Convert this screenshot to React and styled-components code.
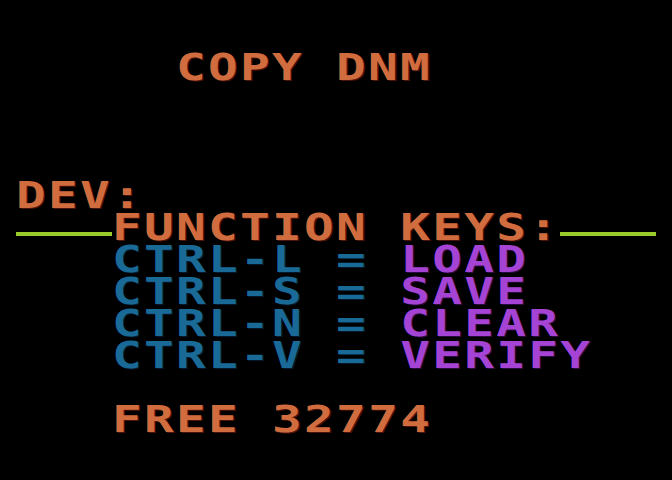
import styled, { createGlobalStyle } from "styled-components";

const GlobalStyle = createGlobalStyle`
	html, body {
		margin: 0;
		padding: 0;
		background: #000;
	}
`;

const COLORS = {
	orange: { fg: "#d06c3e", shade: "#4a140c" },
	blue: { fg: "#1a6a98", shade: "#08182c" },
	purple: { fg: "#a544d4", shade: "#2c0c40" },
	green: { fg: "#9ccc2c", shade: "#203008" },
};

// Atari-ish 20x14 character screen, 32px cells
const Screen = styled.div`
	width: 672px;
	height: 480px;
	box-sizing: border-box;
	padding: 16px;
	background: #000;
	display: grid;
	grid-template-columns: repeat(20, 32px);
	grid-template-rows: repeat(14, 32px);
	overflow: hidden;
`;

const Line = styled.div`
	grid-row: ${(p) => p.$row + 1};
	grid-column: ${(p) => p.$col + 1} / span ${(p) => p.$len};
	height: 32px;
	white-space: pre;
	overflow: visible;
`;

const Glyphs = styled.span`
	display: inline-block;
	padding-top: 6px;
	font-family: "DejaVu Sans Mono", "Liberation Mono", monospace;
	font-weight: bold;
	font-size: 38px;
	line-height: 26px;
	letter-spacing: 1.75px;
	transform: scaleX(1.3);
	transform-origin: left top;
	color: ${(p) => COLORS[p.$color].fg};
	text-shadow: 1px 1px 0 ${(p) => COLORS[p.$color].shade};
`;

const Tint = styled.span`
	color: ${(p) => COLORS[p.$color].fg};
	text-shadow: 1px 1px 0 ${(p) => COLORS[p.$color].shade};
`;

const Rule = styled.div`
	grid-row: ${(p) => p.$row + 1};
	grid-column: ${(p) => p.$col + 1} / span 3;
	align-self: end;
	height: 4px;
	margin-bottom: 4px;
	background: ${COLORS.green.fg};
`;

const keys = [
	["L", "LOAD"],
	["S", "SAVE"],
	["N", "CLEAR"],
	["V", "VERIFY"],
];

export default function App() {
	return (
		<>
			<GlobalStyle />
			<Screen>
				<Line $row={1} $col={5} $len={8}>
					<Glyphs $color="orange">COPY DNM</Glyphs>
				</Line>
				<Line $row={5} $col={0} $len={4}>
					<Glyphs $color="orange">DEV:</Glyphs>
				</Line>
				<Rule $row={6} $col={0} />
				<Line $row={6} $col={3} $len={14}>
					<Glyphs $color="orange">FUNCTION KEYS:</Glyphs>
				</Line>
				<Rule $row={6} $col={17} />
				{keys.map(([k, name], i) => (
					<Line key={k} $row={7 + i} $col={3} $len={15}>
						<Glyphs $color="blue">
							{`CTRL-${k} = `}
							<Tint $color="purple">{name}</Tint>
						</Glyphs>
					</Line>
				))}
				<Line $row={12} $col={3} $len={10}>
					<Glyphs $color="orange">FREE 32774</Glyphs>
				</Line>
			</Screen>
		</>
	);
}
